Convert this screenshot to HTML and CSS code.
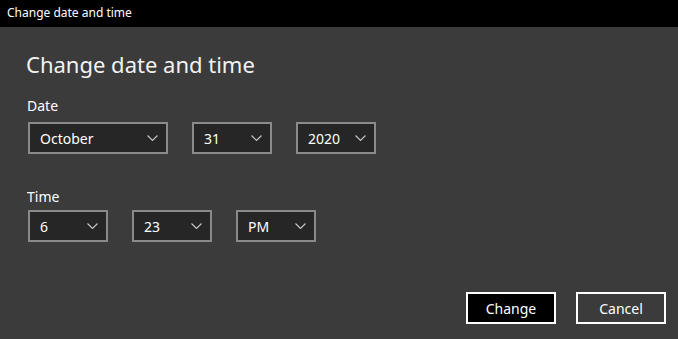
FILE: index.html
```html
<!DOCTYPE html>
<html lang="en">
<head>
  <meta charset="UTF-8">
  <title>Change date and time</title>
  <link rel="stylesheet" href="styles.css">
</head>
<body>
  <div class="titlebar">Change date and time</div>
  <div class="dialog">
    <div class="dialog-title">Change date and time</div>
    <div class="field-label">Date</div>
    <div class="picker-row">
      <div class="picker wide"><span>October</span><svg class="chev" viewBox="0 0 11 6"><path d="M0.5 0.5 L5.5 5.5 L10.5 0.5"/></svg></div>
      <div class="picker"><span>31</span><svg class="chev" viewBox="0 0 11 6"><path d="M0.5 0.5 L5.5 5.5 L10.5 0.5"/></svg></div>
      <div class="picker"><span>2020</span><svg class="chev" viewBox="0 0 11 6"><path d="M0.5 0.5 L5.5 5.5 L10.5 0.5"/></svg></div>
    </div>
    <div class="field-label time-label">Time</div>
    <div class="picker-row">
      <div class="picker"><span>6</span><svg class="chev" viewBox="0 0 11 6"><path d="M0.5 0.5 L5.5 5.5 L10.5 0.5"/></svg></div>
      <div class="picker"><span>23</span><svg class="chev" viewBox="0 0 11 6"><path d="M0.5 0.5 L5.5 5.5 L10.5 0.5"/></svg></div>
      <div class="picker"><span>PM</span><svg class="chev" viewBox="0 0 11 6"><path d="M0.5 0.5 L5.5 5.5 L10.5 0.5"/></svg></div>
    </div>
    <div class="actions">
      <button class="dlg-btn primary">Change</button>
      <button class="dlg-btn">Cancel</button>
    </div>
  </div>
</body>
</html>
```

FILE: styles.css
```css
html, body {
  margin: 0;
  padding: 0;
  background: #3b3b3b;
}
body {
  width: 678px;
  height: 339px;
  overflow: hidden;
  font-family: 'Noto Sans', 'Open Sans', sans-serif;
  color: #fff;
}
.titlebar {
  height: 27px;
  line-height: 26px;
  background: #000;
  font-size: 12px;
  padding-left: 7px;
}
.dialog {
  height: 312px;
  box-sizing: border-box;
  padding: 22px 12px 15px 28px;
  display: flex;
  flex-direction: column;
}
.dialog-title {
  font-size: 22px;
  line-height: 30px;
  margin-left: -2px;
  color: #f2f2f2;
}
.field-label {
  font-size: 14px;
  line-height: 20px;
  margin-top: 17px;
  margin-bottom: 6px;
  margin-left: -1px;
}
.time-label {
  margin-top: 33px;
  margin-bottom: 3px;
}
.picker-row {
  display: flex;
  gap: 24px;
}
.picker {
  width: 80px;
  height: 32px;
  box-sizing: border-box;
  border: 2px solid #8a8a8a;
  background: #262626;
  display: flex;
  align-items: center;
  justify-content: space-between;
  padding: 0 8px 0 10px;
  font-size: 14px;
}
.picker.wide {
  width: 140px;
}
.chev {
  width: 11px;
  height: 6px;
  fill: none;
  stroke: #c8c8c8;
  stroke-width: 1.1;
}
.actions {
  margin-top: auto;
  display: flex;
  justify-content: flex-end;
  gap: 20px;
}
.dlg-btn {
  width: 90px;
  height: 32px;
  box-sizing: border-box;
  border: 2px solid #fff;
  background: #3b3b3b;
  color: #fff;
  font-family: 'Noto Sans', 'Open Sans', sans-serif;
  font-size: 14px;
  padding: 0;
}
.dlg-btn.primary {
  background: #000;
}
```
